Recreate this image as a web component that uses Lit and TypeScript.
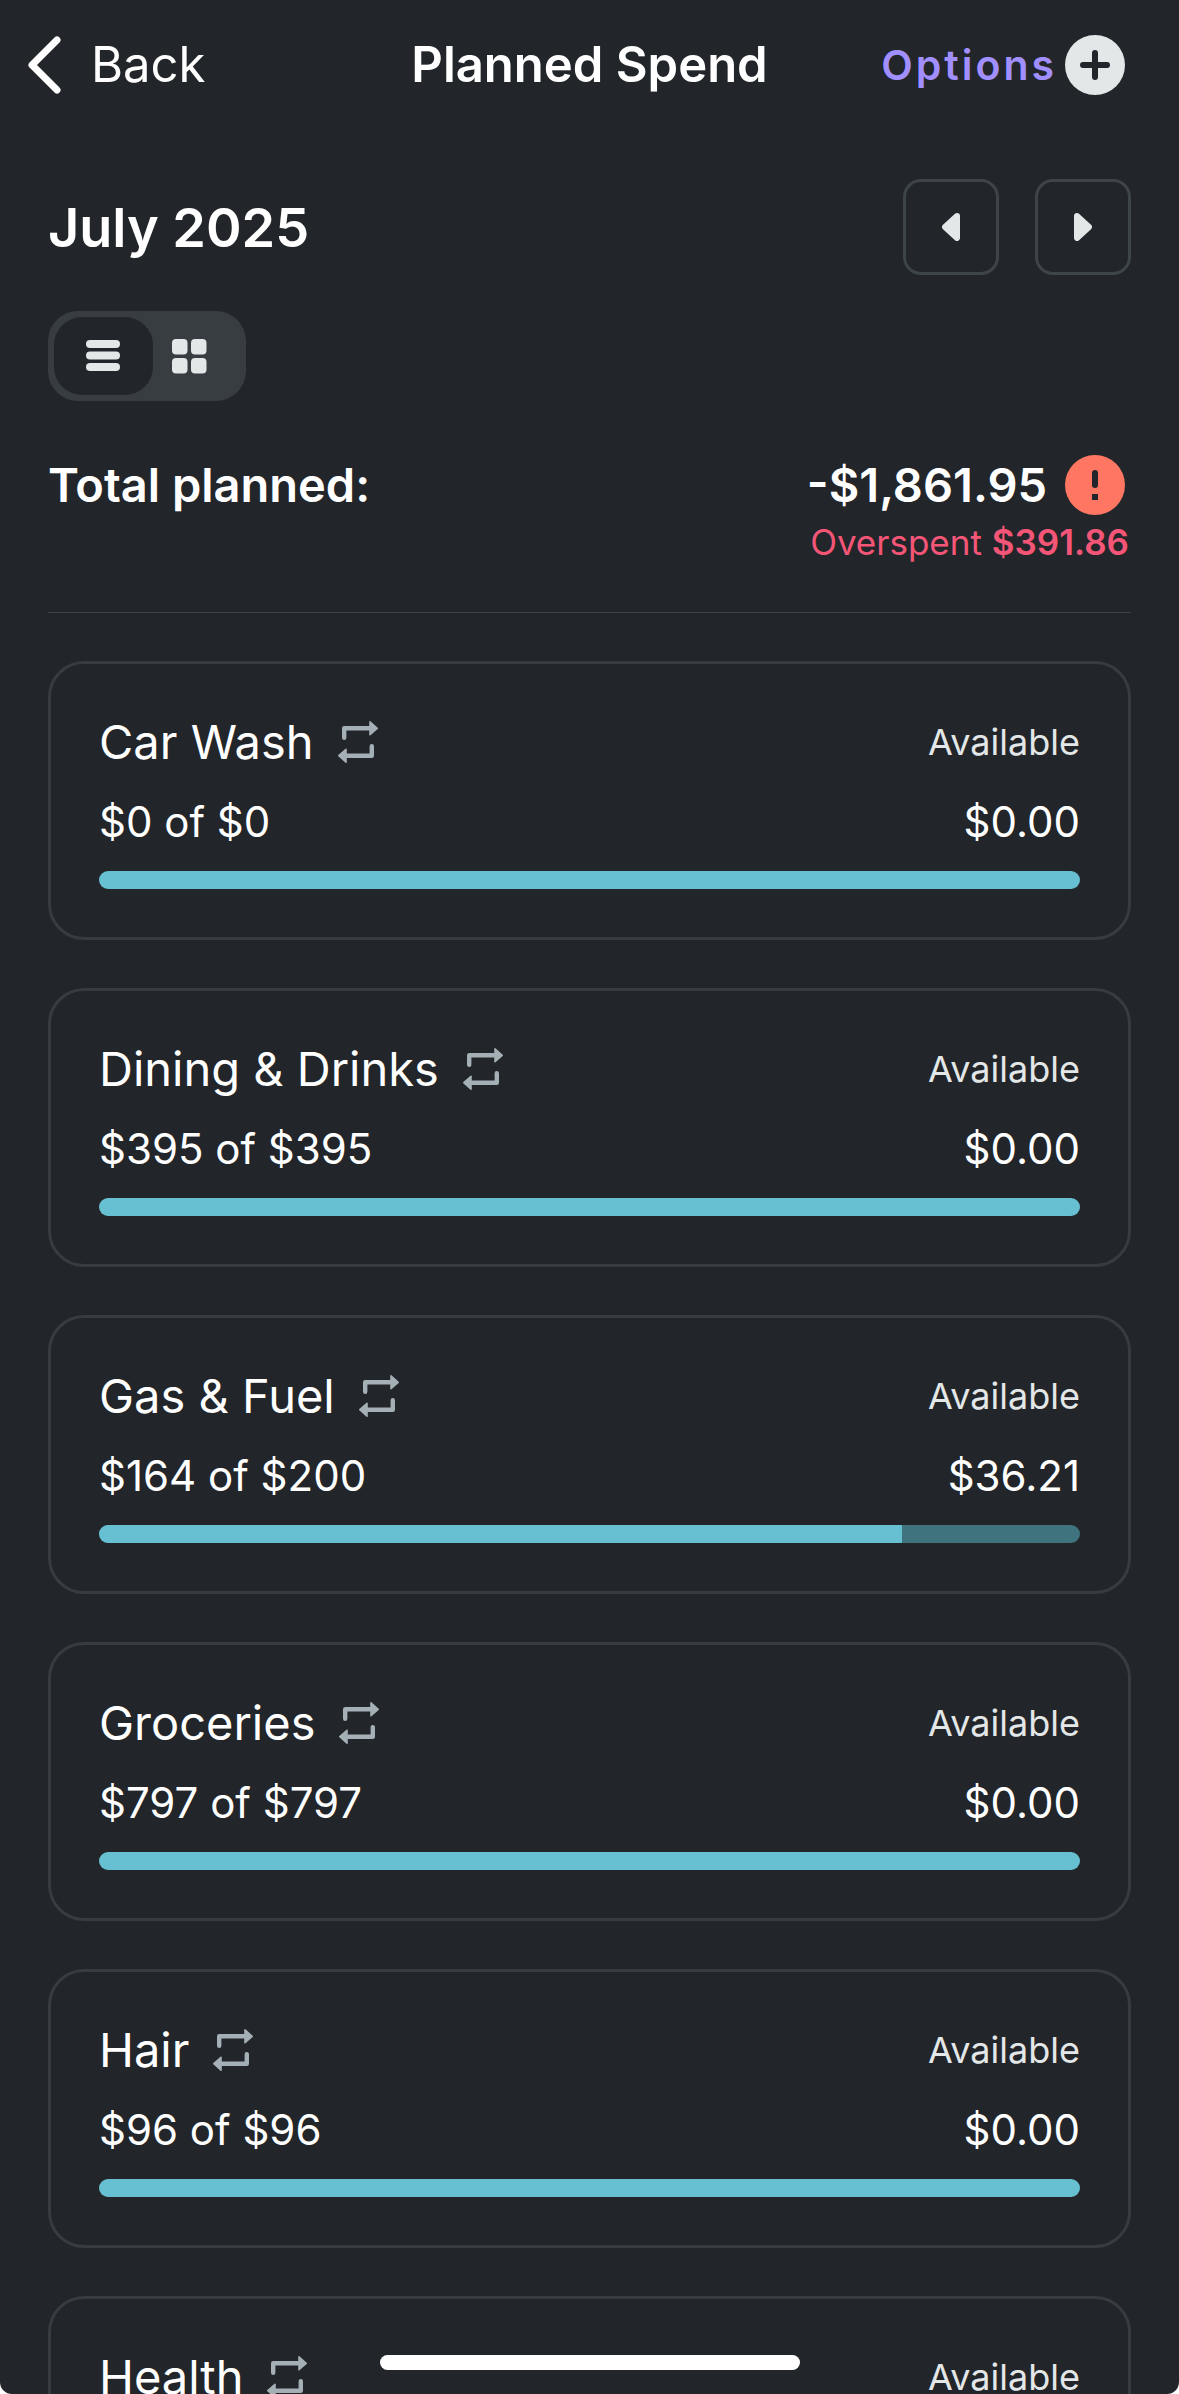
import { LitElement, html, css, svg } from "lit";
import { customElement, property, state } from "lit/decorators.js";
import { styleMap } from "lit/directives/style-map.js";
import { classMap } from "lit/directives/class-map.js";

interface Budget {
  name: string;
  spent: number;
  planned: number;
  available: string;
  percent: number;
}

const BUDGETS: Budget[] = [
  { name: "Car Wash", spent: 0, planned: 0, available: "$0.00", percent: 100 },
  { name: "Dining & Drinks", spent: 395, planned: 395, available: "$0.00", percent: 100 },
  { name: "Gas & Fuel", spent: 164, planned: 200, available: "$36.21", percent: 81.9 },
  { name: "Groceries", spent: 797, planned: 797, available: "$0.00", percent: 100 },
  { name: "Hair", spent: 96, planned: 96, available: "$0.00", percent: 100 },
  { name: "Health", spent: 0, planned: 0, available: "$0.00", percent: 100 },
];

const chevronIcon = svg`<svg width="36" height="60" viewBox="0 0 36 60" fill="none" aria-hidden="true">
  <path d="M30 5 L5 30 L30 55" stroke="#fff" stroke-width="7" stroke-linecap="round" stroke-linejoin="round"/>
</svg>`;

const plusIcon = svg`<svg width="60" height="60" viewBox="0 0 60 60" aria-hidden="true">
  <circle cx="30" cy="30" r="30" fill="#e3e7e8"/>
  <path d="M30 18V42M18 30H42" stroke="#222529" stroke-width="6" stroke-linecap="round"/>
</svg>`;

const alertIcon = svg`<svg width="60" height="60" viewBox="0 0 60 60" role="img" aria-label="Over budget">
  <circle cx="30" cy="30" r="30" fill="#ff7762"/>
  <path d="M30 18V30" stroke="#222529" stroke-width="6" stroke-linecap="round"/>
  <rect x="27" y="39" width="6" height="6" fill="#222529"/>
</svg>`;

const prevIcon = svg`<svg width="18" height="28" viewBox="0 0 18 28" aria-hidden="true">
  <path d="M15 3 L3 14 L15 25 Z" fill="#e3e7e8" stroke="#e3e7e8" stroke-width="6" stroke-linejoin="round"/>
</svg>`;

const nextIcon = svg`<svg width="18" height="28" viewBox="0 0 18 28" aria-hidden="true">
  <path d="M3 3 L15 14 L3 25 Z" fill="#e3e7e8" stroke="#e3e7e8" stroke-width="6" stroke-linejoin="round"/>
</svg>`;

const listIcon = svg`<svg width="34" height="32" viewBox="0 0 34 32" fill="#e3e7e8" aria-hidden="true">
  <rect y="0" width="34" height="8" rx="4"/>
  <rect y="11.5" width="34" height="8" rx="4"/>
  <rect y="23" width="34" height="8" rx="4"/>
</svg>`;

const gridIcon = svg`<svg width="35" height="35" viewBox="0 0 35 35" fill="#e3e7e8" aria-hidden="true">
  <rect x="0" y="0" width="15.5" height="15.5" rx="4"/>
  <rect x="19" y="0" width="15.5" height="15.5" rx="4"/>
  <rect x="0" y="19" width="15.5" height="15.5" rx="4"/>
  <rect x="19" y="19" width="15.5" height="15.5" rx="4"/>
</svg>`;

const repeatIcon = svg`<svg width="40" height="42" viewBox="0 0 40 42" role="img" aria-label="Repeats">
  <path d="M6.200 16.800V7.300H31M33.800 25.200V34.700H9" fill="none" stroke="#a5b0b6" stroke-width="4.400" stroke-linecap="round" stroke-linejoin="round"/>
  <path d="M32 .9L39.200 7.300L32 13.700ZM8 28.300L.8 34.700L8 41.100Z" fill="#a5b0b6" stroke="#a5b0b6" stroke-width="1.600" stroke-linejoin="round"/>
</svg>`;

@customElement("budget-card")
export class BudgetCard extends LitElement {
  @property({ attribute: false }) budget!: Budget;

  static styles = css`
    :host {
      display: block;
    }
    .card {
      display: flex;
      flex-direction: column;
      gap: 24px;
      padding: 48px;
      border: 3px solid #373c40;
      border-radius: 36px;
    }
    .row {
      display: flex;
      align-items: center;
      justify-content: space-between;
    }
    .title {
      display: flex;
      align-items: center;
      gap: 24px;
    }
    .name {
      margin: 0;
      font-size: 47px;
      font-weight: 400;
      line-height: 60px;
    }
    .label {
      font-size: 36px;
      line-height: 60px;
      color: #e3e7e8;
    }
    .money {
      font-size: 42px;
      line-height: 51px;
    }
    .track {
      height: 18px;
      border-radius: 9px;
      overflow: hidden;
      background: #3f737d;
    }
    .fill {
      height: 100%;
      background: #67bfd2;
    }
  `;

  render() {
    const b = this.budget;
    return html`
      <article class="card">
        <div class="row">
          <div class="title">
            <h2 class="name">${b.name}</h2>
            ${repeatIcon}
          </div>
          <span class="label">Available</span>
        </div>
        <div class="row money">
          <span>$${b.spent} of $${b.planned}</span>
          <span>${b.available}</span>
        </div>
        <div class="track" role="progressbar" aria-label=${b.name} aria-valuenow=${b.percent}>
          <div class="fill" style=${styleMap({ width: `${b.percent}%` })}></div>
        </div>
      </article>
    `;
  }
}

@customElement("app-root")
export class AppRoot extends LitElement {
  @state() private view: "list" | "grid" = "list";

  static styles = css`
    :host {
      display: block;
      height: 100vh;
      background: #fff;
      font-family: Inter, Roboto, "Liberation Sans", sans-serif;
      color: #fff;
    }
    * {
      box-sizing: border-box;
    }
    button,
    a {
      font: inherit;
      color: inherit;
      text-decoration: none;
      background: none;
      border: 0;
      padding: 0;
      margin: 0;
      cursor: pointer;
    }
    svg {
      display: block;
      flex: none;
    }
    .screen {
      position: relative;
      height: 100%;
      overflow: hidden;
      background: #222529;
      border-radius: 0 0 12px 12px;
    }
    .header {
      display: grid;
      grid-template-columns: 1fr auto 1fr;
      align-items: center;
      height: 130px;
      padding: 0 27px;
    }
    .bar-title {
      margin: 0;
      font-size: 49px;
      font-weight: 600;
      line-height: 60px;
    }
    .back {
      display: flex;
      align-items: center;
      gap: 28px;
      justify-self: start;
      font-size: 49px;
      line-height: 60px;
    }
    .actions {
      display: flex;
      align-items: center;
      justify-content: flex-end;
      gap: 8px;
      padding-right: 27px;
    }
    .options {
      font-size: 41px;
      font-weight: 600;
      letter-spacing: 3px;
      color: #a18fff;
    }
    .main {
      padding: 49px 48px 0;
    }
    .month {
      display: flex;
      align-items: center;
      justify-content: space-between;
    }
    .month-name {
      margin: 0;
      font-size: 54px;
      font-weight: 600;
    }
    .pager {
      display: flex;
      gap: 36px;
    }
    .step {
      display: grid;
      place-items: center;
      width: 96px;
      height: 96px;
      border: 3px solid #3d4549;
      border-radius: 18px;
    }
    .views {
      display: inline-flex;
      margin-top: 36px;
      padding: 6px;
      border-radius: 30px;
      background: #383d41;
      vertical-align: top;
    }
    .view {
      display: flex;
      align-items: center;
      width: 87px;
      height: 78px;
      padding-left: 19px;
      border-radius: 28px;
    }
    .view.selected {
      justify-content: center;
      width: 99px;
      padding: 0 2px 0 0;
      background: #222529;
    }
    .summary {
      display: flex;
      justify-content: space-between;
      margin-top: 54px;
      padding-bottom: 48px;
      border-bottom: 1px solid #3d4245;
      font-size: 47px;
      font-weight: 600;
      line-height: 60px;
    }
    .totals {
      display: flex;
      flex-direction: column;
      align-items: flex-end;
      gap: 6px;
    }
    .total {
      display: flex;
      gap: 18px;
      padding-right: 6px;
    }
    .overspent {
      padding-right: 2px;
      font-size: 35px;
      font-weight: 400;
      line-height: 43px;
      color: #f55677;
    }
    .overspent strong {
      font-weight: 600;
    }
    .cards {
      display: grid;
      gap: 48px;
      margin-top: 48px;
    }
    .home-bar {
      position: absolute;
      bottom: 24px;
      left: 50%;
      width: 420px;
      height: 15px;
      margin-left: -210px;
      border-radius: 8px;
      background: #fff;
    }
  `;

  render() {
    return html`
      <div class="screen">
        <header class="header">
          <a class="back" href="#back">${chevronIcon}<span>Back</span></a>
          <h1 class="bar-title">Planned Spend</h1>
          <div class="actions">
            <button class="options" type="button">Options</button>
            <button type="button" aria-label="Add">${plusIcon}</button>
          </div>
        </header>
        <main class="main">
          <div class="month">
            <h2 class="month-name">July 2025</h2>
            <div class="pager">
              <button class="step" type="button" aria-label="Previous month">${prevIcon}</button>
              <button class="step" type="button" aria-label="Next month">${nextIcon}</button>
            </div>
          </div>
          <div class="views" role="group" aria-label="View">
            <button
              type="button"
              aria-label="List"
              aria-pressed=${this.view === "list"}
              class=${classMap({ view: true, selected: this.view === "list" })}
              @click=${() => (this.view = "list")}
            >${listIcon}</button>
            <button
              type="button"
              aria-label="Grid"
              aria-pressed=${this.view === "grid"}
              class=${classMap({ view: true, selected: this.view === "grid" })}
              @click=${() => (this.view = "grid")}
            >${gridIcon}</button>
          </div>
          <section class="summary">
            <span>Total planned:</span>
            <div class="totals">
              <div class="total"><span>-$1,861.95</span>${alertIcon}</div>
              <div class="overspent">Overspent <strong>$391.86</strong></div>
            </div>
          </section>
          <section class="cards">
            ${BUDGETS.map((b) => html`<budget-card .budget=${b}></budget-card>`)}
          </section>
        </main>
        <div class="home-bar"></div>
      </div>
    `;
  }
}
